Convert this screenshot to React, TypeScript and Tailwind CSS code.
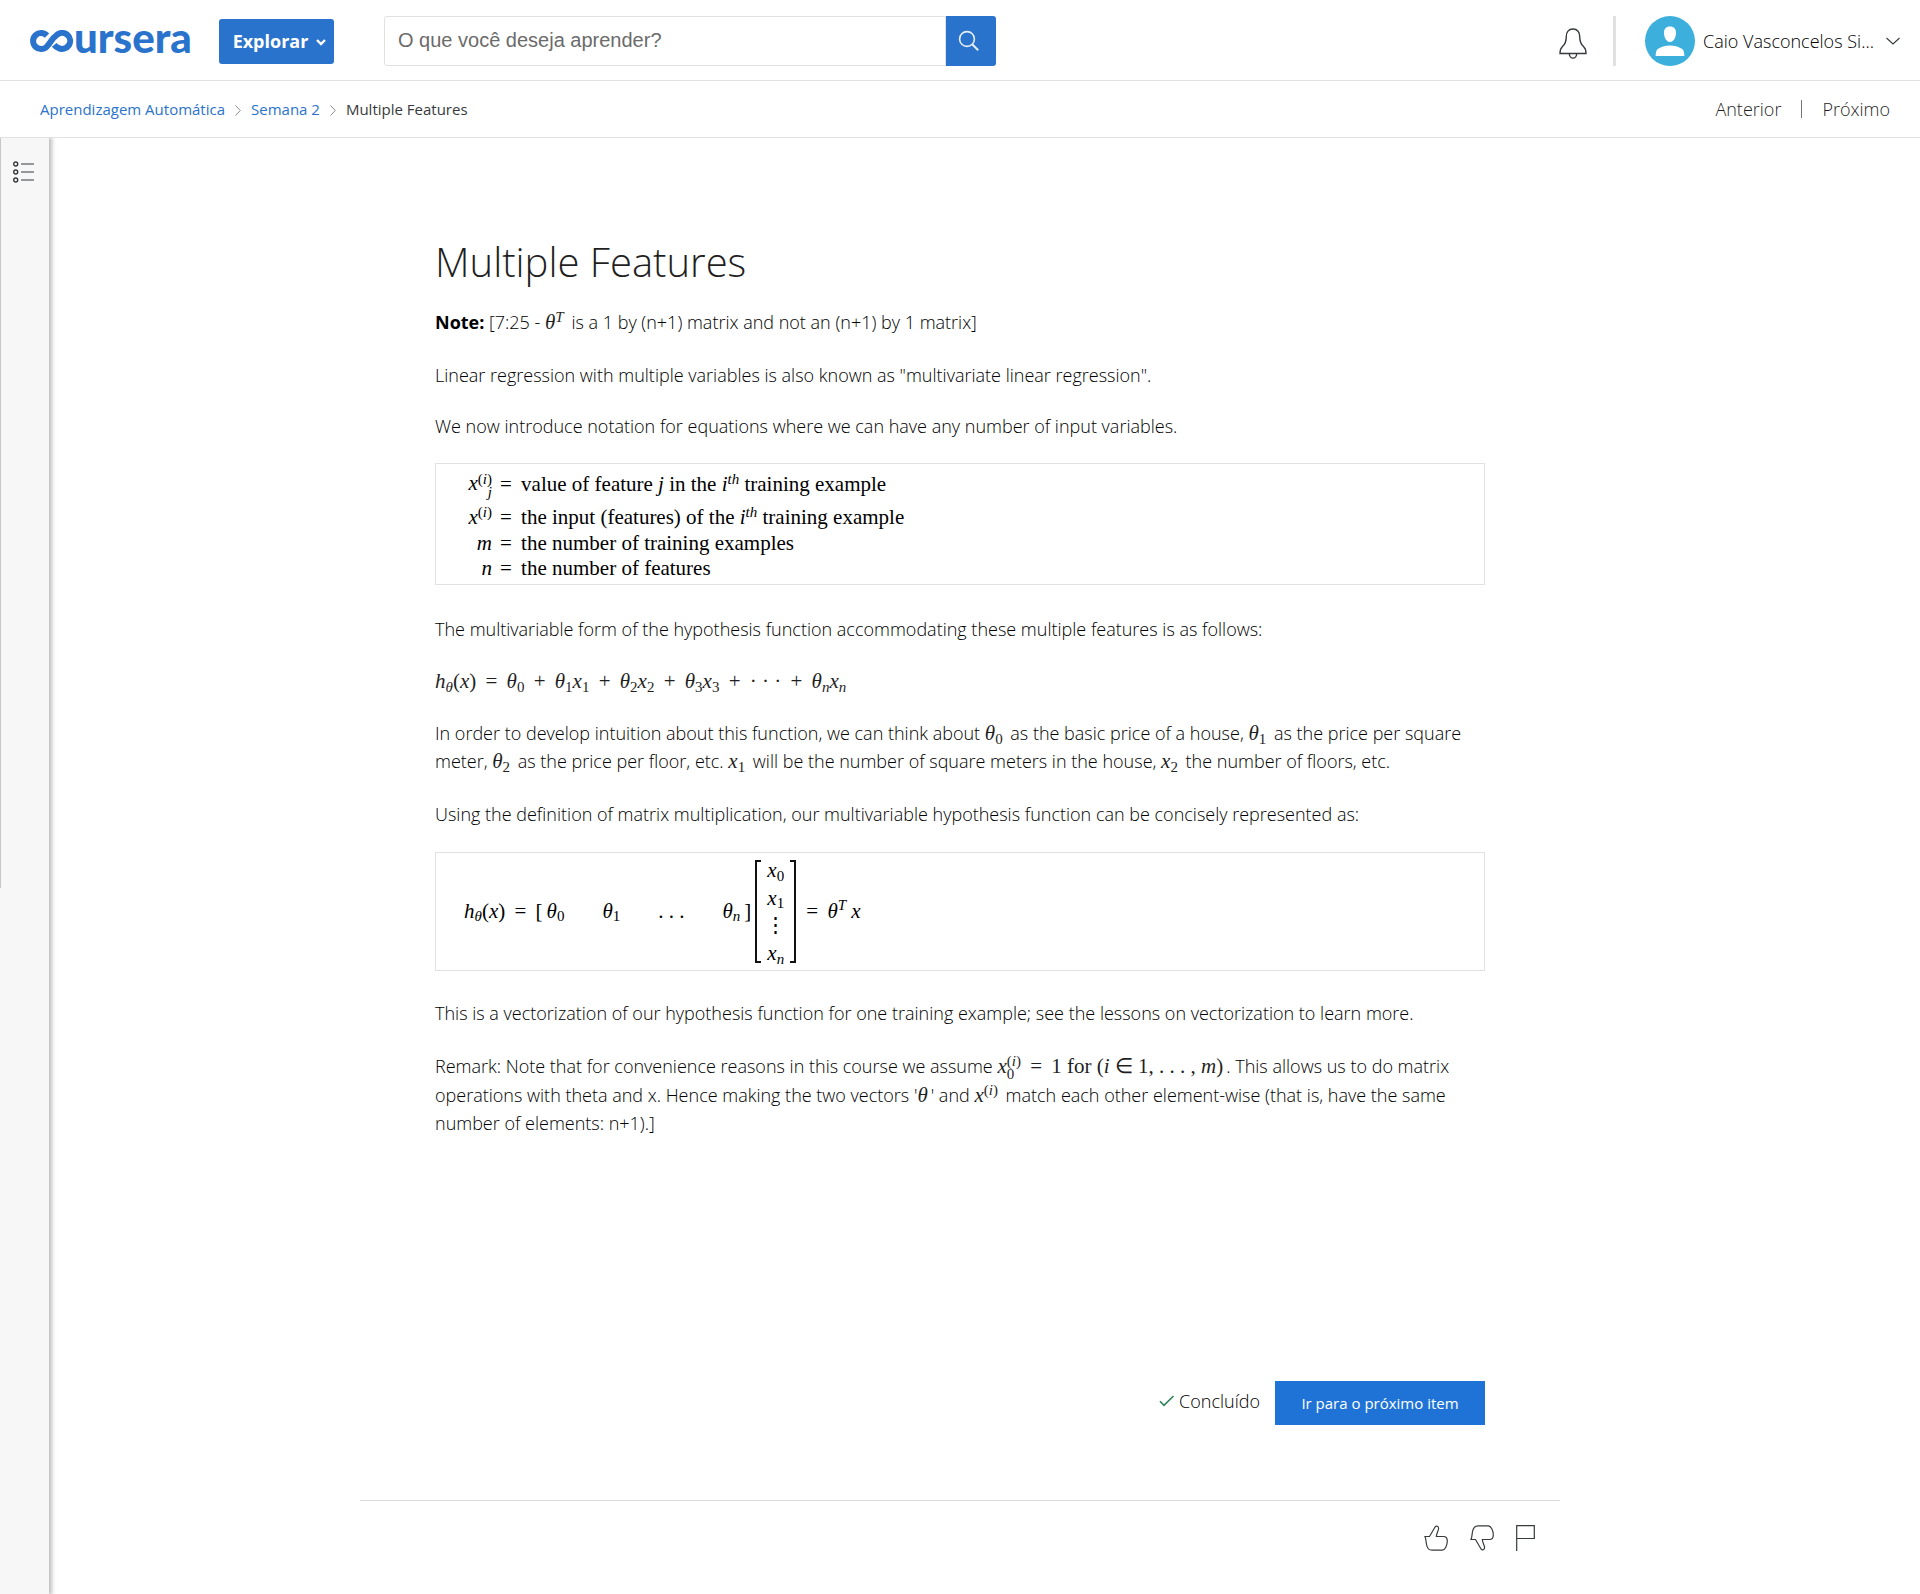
import type { ReactNode } from 'react';

function V({ children }: { children: ReactNode }) {
  return <i className="italic">{children}</i>;
}

function Sub({ children }: { children: ReactNode }) {
  return <sub className="text-[15px] leading-none">{children}</sub>;
}

function Sup({ children }: { children: ReactNode }) {
  return <sup className="text-[15px] leading-none">{children}</sup>;
}

function Op({ children }: { children: ReactNode }) {
  return <span className="mx-1"> {children} </span>;
}

function Theta({ n }: { n?: ReactNode }) {
  return (
    <>
      <V>θ</V>
      {n !== undefined && <Sub>{n}</Sub>}
    </>
  );
}

function X({ n }: { n?: ReactNode }) {
  return (
    <>
      <V>x</V>
      {n !== undefined && <Sub>{n}</Sub>}
    </>
  );
}

function Scripts({ over, under }: { over: ReactNode; under: ReactNode }) {
  return (
    <span className="inline-grid align-middle text-[15px] leading-[13px]">
      <span>{over}</span>
      <span>{under}</span>
    </span>
  );
}

function M({ children }: { children: ReactNode }) {
  return (
    <span className="mr-[3px] whitespace-nowrap font-['Liberation_Serif',serif] text-[21px] leading-none text-[#1f1f1f]">
      {children}
    </span>
  );
}

function Logo() {
  return (
    <a href="#home" aria-label="coursera" className="flex h-8 w-[159px] shrink-0 items-center text-[#2a73cc]">
      <svg width="44" height="22" viewBox="0 0 44 22" fill="none" className="shrink-0" aria-hidden="true">
        <path
          d="M17 5.600A8 8 0 1 0 17 16.400C20.500 12.800 22.200 8 26.500 5.200A8 8 0 1 1 28.500 18C26.800 17.300 25.400 16.300 24.200 14.800"
          stroke="currentColor"
          strokeWidth="6"
        />
      </svg>
      <span className="-mt-2 font-['Lato',sans-serif] text-[42px] leading-none font-black">ursera</span>
    </a>
  );
}

function Header() {
  return (
    <header className="flex h-[81px] items-center border-b border-[#e1e1e1] pt-0.5 pr-5 pl-[30px]">
      <Logo />
      <button className="ml-[30px] flex h-[45px] w-[115px] items-center justify-center gap-2 rounded-[3px] bg-[#2a73cc] pl-1.5 text-lg font-bold text-white">
        Explorar
        <svg width="10" height="7" viewBox="0 0 10 7" fill="none" stroke="currentColor" strokeWidth="2.4" className="mt-0.5" aria-hidden="true">
          <path d="M1 1l4 4 4-4" />
        </svg>
      </button>
      <form className="ml-[50px] flex h-[50px] w-[612px]" onSubmit={(e) => e.preventDefault()}>
        <input
          type="text"
          aria-label="Pesquisar"
          placeholder="O que você deseja aprender?"
          className="min-w-0 flex-1 rounded-l-[3px] border border-[#e1e1e1] px-[13px] pb-0.5 font-['Liberation_Sans',sans-serif] text-xl placeholder:text-[#6b6b6b]"
        />
        <button aria-label="Buscar" className="flex w-[50px] items-center justify-center rounded-r-[3px] bg-[#2a73cc] pr-1 text-white">
          <svg width="22" height="22" viewBox="0 0 22 22" fill="none" stroke="#e8effa" strokeWidth="1.6" aria-hidden="true">
            <circle cx="9" cy="9" r="7.4" />
            <path d="M14.2 14.2l6 6" strokeWidth="2" />
          </svg>
        </button>
      </form>
      <div className="ml-auto flex items-center">
        <button aria-label="Notificações">
          <svg width="28" height="32" viewBox="0 0 28 32" fill="none" stroke="#373a3c" strokeWidth="1.4" className="mt-1.5" aria-hidden="true">
            <path d="M14 1C9.500 1 7.300 4.400 7.300 8.400C7.300 13.500 6.300 16 3.500 18.500C1.500 20.300 1 21.500 1 25.500H27C27 21.500 26.500 20.300 24.500 18.500C21.700 16 20.700 13.500 20.700 8.400C20.700 4.400 18.500 1 14 1Z" />
            <path d="M10.300 25.500a3.700 4.600 0 0 0 7.400 0" />
          </svg>
        </button>
        <span className="ml-[26px] h-[50px] w-[3px] bg-[#e1e1e1]" />
        <button className="ml-[29px] flex items-center text-lg font-light text-black">
          <svg width="50" height="50" viewBox="0 0 50 50" aria-hidden="true">
            <circle cx="25" cy="25" r="25" fill="#3cafdc" />
            <path d="M25 10.500c-4.200 0-6 2.600-6 6.200 0 4.800 2.400 9.300 6 9.300s6-4.500 6-9.300c0-3.600-1.800-6.200-6-6.200z" fill="#fff" />
            <path d="M10.600 40c.2-4 .6-6.400 3-7.500C17 30.600 20.500 29.500 25 29.500s8 1.100 11.400 3c2.400 1.100 2.800 3.500 3 7.500z" fill="#fff" />
          </svg>
          <span className="ml-2">Caio Vasconcelos Si...</span>
          <svg width="14" height="8" viewBox="0 0 14 8" fill="none" stroke="#373a3c" strokeWidth="1.1" className="ml-3" aria-hidden="true">
            <path d="M.5 1l6.500 6 6.500-6" />
          </svg>
        </button>
      </div>
    </header>
  );
}

function Crumb() {
  return (
    <svg width="6" height="11" viewBox="0 0 6 11" fill="none" stroke="#8c8c8c" className="mt-0.5" aria-hidden="true">
      <path d="M.5.500L5.300 5.500.5 10.500" />
    </svg>
  );
}

function NavBar() {
  return (
    <div className="flex h-[57px] items-center justify-between border-b border-[#e1e1e1] pr-[30px] pl-10">
      <nav aria-label="Trilha" className="flex items-center gap-2.5 text-[15px] text-[#2a73cc]">
        <a href="#curso">Aprendizagem Automática</a>
        <Crumb />
        <a href="#semana">Semana 2</a>
        <Crumb />
        <span className="text-[#373a3c]">Multiple Features</span>
      </nav>
      <nav aria-label="Itens" className="flex items-center gap-5 text-lg font-light text-[#1f1f1f]">
        <a href="#anterior">Anterior</a>
        <span className="h-[18px] w-px bg-[#757575]" />
        <a href="#proximo">Próximo</a>
      </nav>
    </div>
  );
}

function Def({ symbol, children, className }: { symbol: ReactNode; children: ReactNode; className: string }) {
  return (
    <div className={className}>
      <dt className="w-7 text-right whitespace-nowrap">{symbol}</dt>
      <dd className="whitespace-nowrap"><span className="mr-1">= </span>{children}</dd>
    </div>
  );
}

function Article() {
  return (
    <article className="mx-auto w-full max-w-[1050px] text-lg leading-7 font-light text-black">
      <h1 className="text-[40px] leading-[52px] font-light text-[#1f1f1f]">Multiple Features</h1>
      <p className="mt-5">
        <strong className="font-bold">Note:</strong> [7:25 - <M><V>θ</V><Sup><V>T</V></Sup></M> is a 1 by (n+1) matrix and not an (n+1) by 1 matrix]
      </p>
      <p className="mt-[25px]">Linear regression with multiple variables is also known as "multivariate linear regression".</p>
      <p className="mt-[23px]">We now introduce notation for equations where we can have any number of input variables.</p>

      <dl className="mt-[23px] border border-[#e1e1e1] pb-1 pl-7 font-['Liberation_Serif',serif] text-[21px]">
        <Def className="flex h-10 items-center gap-2" symbol={<><V>x</V><Scripts over={<>(<V>i</V>)</>} under={<V>j</V>} /></>}>
          value of feature <V>j</V> in the <V>i</V><Sup><V>th</V></Sup> training example
        </Def>
        <Def className="flex h-[26px] items-center gap-2" symbol={<><V>x</V><Sup>(<V>i</V>)</Sup></>}>
          the input (features) of the <V>i</V><Sup><V>th</V></Sup> training example
        </Def>
        <Def className="flex h-[25px] items-center gap-2" symbol={<V>m</V>}>the number of training examples</Def>
        <Def className="flex h-[25px] items-center gap-2" symbol={<V>n</V>}>the number of features</Def>
      </dl>

      <p className="mt-[30px]">The multivariable form of the hypothesis function accommodating these multiple features is as follows:</p>
      <p className="mt-6">
        <M>
          <V>h</V><Sub><V>θ</V></Sub>(<V>x</V>)<Op>=</Op><Theta n="0" /><Op>+</Op><Theta n="1" /><X n="1" /><Op>+</Op><Theta n="2" /><X n="2" /><Op>+</Op><Theta n="3" /><X n="3" /><Op>+</Op>· · ·<Op>+</Op><Theta n={<V>n</V>} /><X n={<V>n</V>} />
        </M>
      </p>
      <p className="mt-6">
        In order to develop intuition about this function, we can think about <M><Theta n="0" /></M> as the basic price of a house, <M><Theta n="1" /></M> as the price per square meter, <M><Theta n="2" /></M> as the price per floor, etc. <M><X n="1" /></M> will be the number of square meters in the house, <M><X n="2" /></M> the number of floors, etc.
      </p>
      <p className="mt-[25px]">Using the definition of matrix multiplication, our multivariable hypothesis function can be concisely represented as:</p>

      <div className="mt-6 flex items-center border border-[#e1e1e1] py-[7px] pl-7 font-['Liberation_Serif',serif] text-[21px] leading-6 whitespace-nowrap">
        <span className="mb-0.5"><V>h</V><Sub><V>θ</V></Sub>(<V>x</V>)<Op>=</Op>[</span>
        <span className="mb-0.5 flex gap-[38px] px-1">
          <span><Theta n="0" /></span>
          <span><Theta n="1" /></span>
          <span>. . .</span>
          <span><Theta n={<V>n</V>} /></span>
        </span>
        <span className="mb-0.5">]</span>
        <span className="ml-1 flex h-[103px] items-stretch">
          <span className="w-1.5 border-y-2 border-l-2 border-[#111]" />
          <span className="flex flex-col justify-between px-1 text-center leading-5">
            <span><X n="0" /></span>
            <span><X n="1" /></span>
            <span>⋮</span>
            <span><X n={<V>n</V>} /></span>
          </span>
          <span className="w-1.5 border-y-2 border-r-2 border-[#111]" />
        </span>
        <span className="mb-0.5 ml-1.5"><Op>=</Op><V>θ</V><Sup><V>T</V></Sup> <V>x</V></span>
      </div>

      <p className="mt-7">This is a vectorization of our hypothesis function for one training example; see the lessons on vectorization to learn more.</p>
      <p className="mt-[25px]">
        Remark: Note that for convenience reasons in this course we assume <M><V>x</V><Scripts over={<>(<V>i</V>)</>} under="0" /><Op>=</Op>1 for (<V>i</V> ∈ 1, . . . , <V>m</V>)</M>. This allows us to do matrix operations with theta and x. Hence making the two vectors '<M><V>θ</V></M>' and <M><V>x</V><Sup>(<V>i</V>)</Sup></M> match each other element-wise (that is, have the same number of elements: n+1).]
      </p>
    </article>
  );
}

function Actions() {
  return (
    <div className="mx-auto mt-[244px] flex w-full max-w-[1050px] items-center justify-end text-lg font-light text-black">
      <svg width="16" height="12" viewBox="0 0 16 12" fill="none" stroke="#2d8259" strokeWidth="1.6" className="mb-1" aria-hidden="true">
        <path d="M1 6.300l4 4L14.500 1" />
      </svg>
      <span className="mr-[15px] mb-1 ml-1">Concluído</span>
      <button className="h-11 w-[210px] bg-[#2073d6] text-[15px] font-medium text-white">Ir para o próximo item</button>
    </div>
  );
}

const THUMB = 'M1 11.500H5.500L11.200 1.800C12.200.4 14.600 1.200 14.600 3.400C14.600 5.400 12.700 7.800 12.300 11.500H19.500C22.500 11.500 23.300 14 23.300 16C23.300 20.500 21 25.200 18.300 25.200H8C5 25.200 3.200 23 2.500 19.500C2 16.500 2 13.500 1 11.500Z';

function Feedback() {
  return (
    <footer className="mx-auto mt-[75px] flex w-full max-w-[1200px] items-start justify-end gap-[22px] border-t border-[#dcdcdc] pt-6 pr-[25px]">
      <button aria-label="Gostei">
        <svg width="24" height="26" viewBox="0 0 24 26" fill="none" stroke="#373a3c" strokeWidth="1.2" aria-hidden="true">
          <path d={THUMB} />
        </svg>
      </button>
      <button aria-label="Não gostei">
        <svg width="24" height="26" viewBox="0 0 24 26" fill="none" stroke="#373a3c" strokeWidth="1.2" aria-hidden="true">
          <path d={THUMB} transform="matrix(1 0 0 -1 0 26)" />
        </svg>
      </button>
      <button aria-label="Denunciar">
        <svg width="19" height="26" viewBox="0 0 19 26" fill="none" stroke="#373a3c" strokeWidth="1.2" aria-hidden="true">
          <path d="M.7 26V.7H18.300V13.500H.7" />
        </svg>
      </button>
    </footer>
  );
}

function Sidebar() {
  return (
    <aside className="w-[49px] shrink-0 bg-[#f7f7f7] shadow-[2px_0_4px_1px_rgba(0,0,0,0.25)]">
      <div className="h-[750px] border-l border-[#c8c8c8] pt-[23px] pl-3">
        <button aria-label="Abrir menu" className="block">
          <svg width="22" height="22" viewBox="0 0 22 22" fill="none" stroke="#373a3c" strokeWidth="1.4" aria-hidden="true">
            <circle cx="2.700" cy="3" r="2" />
            <circle cx="2.700" cy="11" r="2" />
            <circle cx="2.700" cy="19" r="2" />
            <path d="M8 3h13M8 11h13M8 19h13" strokeWidth="1.200" />
          </svg>
        </button>
      </div>
    </aside>
  );
}

export default function App() {
  return (
    <div className="flex min-h-screen flex-col overflow-x-hidden bg-white font-['Open_Sans',sans-serif]">
      <Header />
      <NavBar />
      <div className="flex flex-1 overflow-hidden">
        <Sidebar />
        <main className="min-w-0 flex-1 pt-[98px] pr-[49px] pb-10">
          <Article />
          <Actions />
          <Feedback />
        </main>
      </div>
    </div>
  );
}
